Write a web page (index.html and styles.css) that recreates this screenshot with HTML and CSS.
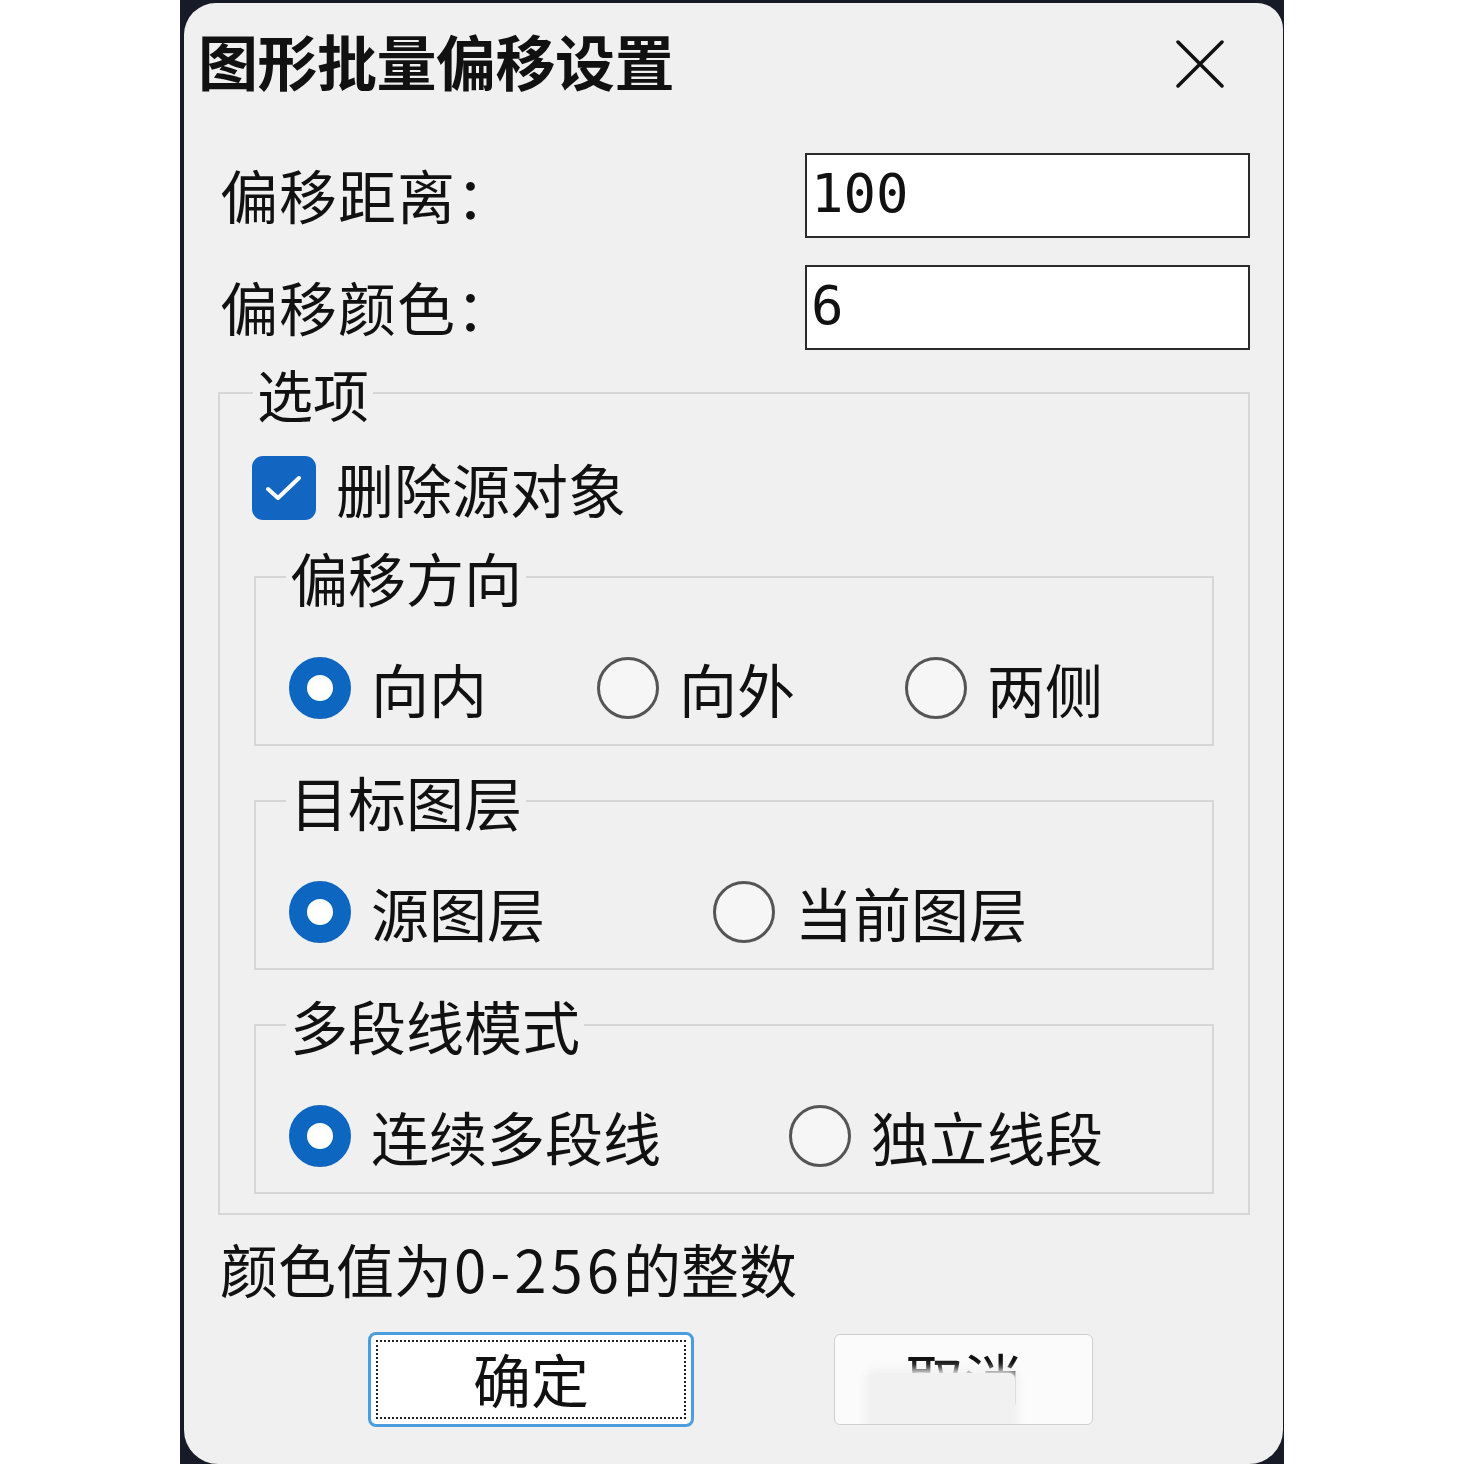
FILE: index.html
```html
<!DOCTYPE html>
<html lang="zh-CN">
<head>
    <meta charset="UTF-8">
    <meta name="viewport" content="width=device-width, initial-scale=1.0">
    <title>图形批量偏移设置</title>
    <link rel="stylesheet" href="styles.css">
</head>
<body>
    <div class="frame">
        <div class="dialog">
            <div class="title-bar">
                <h1 class="title">图形批量偏移设置</h1>
                <button class="close-button" aria-label="关闭">
                    <svg width="48" height="48" viewBox="0 0 48 48">
                        <path d="M2 2 L46 46 M46 2 L2 46" stroke="#111" stroke-width="3.5" stroke-linecap="round" fill="none"/>
                    </svg>
                </button>
            </div>

            <div class="form-row">
                <label for="offset-distance">偏移距离：</label>
                <input type="text" id="offset-distance" value="100">
            </div>
            <div class="form-row form-row-second">
                <label for="offset-color">偏移颜色：</label>
                <input type="text" id="offset-color" value="6">
            </div>

            <fieldset class="group group-main">
                <legend>选项</legend>

                <label class="check-row">
                    <span class="checkbox">
                        <svg width="64" height="64" viewBox="0 0 64 64">
                            <path d="M16 33 L26 42 L47 22" stroke="#fff" stroke-width="4" stroke-linecap="round" stroke-linejoin="round" fill="none"/>
                        </svg>
                    </span>
                    删除源对象
                </label>

                <fieldset class="group group-sub">
                    <legend>偏移方向</legend>
                    <div class="radio-row radio-row-direction">
                        <label class="radio"><span class="radio-dot checked"></span>向内</label>
                        <label class="radio"><span class="radio-dot"></span>向外</label>
                        <label class="radio"><span class="radio-dot"></span>两侧</label>
                    </div>
                </fieldset>

                <fieldset class="group group-sub">
                    <legend>目标图层</legend>
                    <div class="radio-row radio-row-layer">
                        <label class="radio"><span class="radio-dot checked"></span>源图层</label>
                        <label class="radio"><span class="radio-dot"></span>当前图层</label>
                    </div>
                </fieldset>

                <fieldset class="group group-sub">
                    <legend>多段线模式</legend>
                    <div class="radio-row radio-row-mode">
                        <label class="radio"><span class="radio-dot checked"></span>连续多段线</label>
                        <label class="radio"><span class="radio-dot"></span>独立线段</label>
                    </div>
                </fieldset>
            </fieldset>

            <p class="hint">颜色值为<span class="hint-num">0-256</span>的整数</p>

            <div class="buttons">
                <button class="btn btn-ok"><span class="focus-ring">确定</span></button>
                <button class="btn btn-cancel">取消<span class="smudge"></span></button>
            </div>
        </div>
    </div>
</body>
</html>
```

FILE: styles.css
```css
body {
    margin: 0;
    padding: 0;
    background-color: #fff;
    font-family: "Noto Sans CJK SC", "Noto Sans", sans-serif;
    color: #111;
}

.frame {
    width: 1104px;
    height: 1464px;
    margin-left: 180px;
    padding: 3px 1px 0 4px;
    box-sizing: border-box;
    background-color: #161b27;
}

.dialog {
    height: 100%;
    box-sizing: border-box;
    padding: 0 33px 0 36px;
    background-color: #f0f0f0;
    border-radius: 32px 26px 34px 34px;
    overflow: hidden;
}

/* title */
.title-bar {
    display: flex;
    align-items: center;
    justify-content: space-between;
    padding-top: 27px;
    margin-left: -22px;
}

.title {
    margin: 0;
    font-size: 60px;
    line-height: 60px;
    font-weight: 700;
    letter-spacing: -0.5px;
}

.close-button {
    width: 48px;
    height: 48px;
    margin: 7px 26px 0 0;
    padding: 0;
    border: none;
    background: none;
}

.close-button svg {
    display: block;
}

/* text fields */
.form-row {
    display: flex;
    align-items: center;
    justify-content: space-between;
    height: 85px;
    margin-top: 63px;
}

.form-row-second {
    margin-top: 27px;
}

.form-row label {
    font-size: 58px;
    line-height: 58px;
    margin-bottom: 4px;
    letter-spacing: 1px;
}

.form-row input {
    width: 445px;
    height: 85px;
    box-sizing: border-box;
    padding: 0 0 4px 4px;
    border: 2px solid #2b2b2b;
    background-color: #fff;
    font-family: "DejaVu Sans Mono", "Liberation Mono", monospace;
    font-size: 54px;
    color: #111;
    outline: none;
}

/* group boxes */
.group {
    margin: 0;
    padding: 0;
    border: 2px solid #d6d6d6;
    min-width: 0;
}

.group legend {
    padding: 0 4px;
    font-size: 58px;
    line-height: 58px;
}

.group-main {
    margin-top: 15px;
    margin-left: -2px;
    padding-bottom: 19px;
}

.group-main > legend {
    margin-left: 33px;
    font-size: 56px;
    line-height: 56px;
}

.group-sub {
    margin: 26px 34px 0 34px;
    padding-bottom: 24px;
}

.check-row + .group-sub {
    margin-top: 28px;
}

.group-sub > legend {
    margin-left: 30px;
}

.check-row {
    display: flex;
    align-items: center;
    gap: 20px;
    height: 64px;
    margin: 35px 0 0 32px;
    font-size: 58px;
    line-height: 58px;
}

.checkbox {
    width: 64px;
    height: 64px;
    border-radius: 11px;
    background-color: #1266c2;
}

.checkbox svg {
    display: block;
}

/* radio rows */
.radio-row {
    display: grid;
    height: 64px;
    margin: 50px 0 0 33px;
}

.radio-row-direction {
    grid-template-columns: 308px 308px auto;
}

.radio-row-layer {
    grid-template-columns: 424px auto;
}

.radio-row-mode {
    grid-template-columns: 500px auto;
}

.radio {
    display: flex;
    align-items: center;
    gap: 20px;
    font-size: 58px;
    line-height: 58px;
}

.radio-dot {
    width: 62px;
    height: 62px;
    box-sizing: border-box;
    flex-shrink: 0;
    border: 3px solid #555;
    border-radius: 50%;
    background-color: #f6f6f6;
}

.radio-dot.checked {
    border: 18px solid #0d67c0;
    background-color: #fff;
}

/* footer */
.hint {
    margin: 24px 0 0 0;
    font-size: 58px;
    line-height: 58px;
}

.hint-num {
    letter-spacing: 4px;
    margin-left: 2px;
}

.buttons {
    display: flex;
    align-items: center;
    gap: 140px;
    margin: 35px 0 0 148px;
}

.btn {
    position: relative;
    padding: 0;
    font-family: "Noto Sans CJK SC", sans-serif;
    font-size: 58px;
    line-height: 58px;
    color: #111;
    cursor: pointer;
}

.btn-ok {
    width: 326px;
    height: 95px;
    border: 3px solid #4a9ee0;
    border-radius: 8px;
    background-color: #fff;
}

.focus-ring {
    display: flex;
    align-items: center;
    justify-content: center;
    height: 79px;
    margin: 0 5px;
    border: 2px dotted #222;
    padding-bottom: 4px;
    box-sizing: border-box;
}

.btn-cancel {
    width: 259px;
    height: 91px;
    padding-bottom: 4px;
    border: 1px solid #cfcfcf;
    border-radius: 6px;
    background-color: #fbfbfb;
    overflow: hidden;
}

.smudge {
    position: absolute;
    left: 34px;
    top: 38px;
    width: 146px;
    height: 70px;
    border-radius: 6px;
    background-color: #f1f1f1;
    box-shadow: 0 0 8px 4px #f1f1f1;
}
```
